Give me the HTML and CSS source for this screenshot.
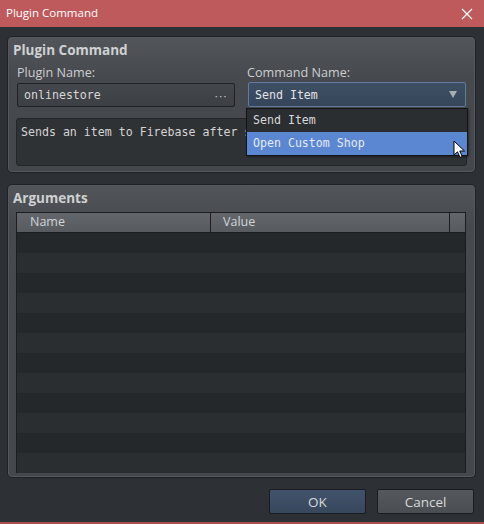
FILE: index.html
```html
<!DOCTYPE html>
<html>
<head>
<meta charset="utf-8">
<link rel="stylesheet" href="styles.css">
</head>
<body>
<div class="window">
  <div class="titlebar">
    <span class="title">Plugin Command</span>
    <svg class="close" width="12" height="12" viewBox="0 0 12 12"><path d="M1 1 L11 11 M11 1 L1 11" stroke="#fff" stroke-width="1.2" fill="none"/></svg>
  </div>
  <div class="content">
    <div class="group group-cmd">
      <div class="group-title">Plugin Command</div>
      <div class="fields">
        <div class="field">
          <div class="label">Plugin Name:</div>
          <div class="input"><span class="mono">onlinestore</span><span class="dots">···</span></div>
        </div>
        <div class="field field-right">
          <div class="label">Command Name:</div>
          <div class="select"><span class="mono">Send Item</span><span class="arrow"></span></div>
        </div>
      </div>
      <div class="textarea mono">Sends an item to Firebase after s</div>
      <div class="dropdown">
        <div class="opt mono">Send Item</div>
        <div class="opt opt-sel mono">Open Custom Shop</div>
      </div>
      <svg class="cursor" width="14" height="20" viewBox="0 0 14 20"><path d="M1 1 L1 15 L4.5 11.8 L7 17.5 L9.2 16.5 L6.8 11 L11.5 11 Z" fill="#fff" stroke="#000" stroke-width="1" stroke-linejoin="miter"/></svg>
    </div>
    <div class="group group-args">
      <div class="group-title">Arguments</div>
      <div class="table">
        <div class="thead">
          <div class="th th-name">Name</div>
          <div class="th th-value">Value</div>
          <div class="th th-end"></div>
        </div>
        <div class="tbody">
          <div class="row"></div><div class="row"></div><div class="row"></div><div class="row"></div>
          <div class="row"></div><div class="row"></div><div class="row"></div><div class="row"></div>
          <div class="row"></div><div class="row"></div><div class="row"></div><div class="row"></div>
        </div>
      </div>
    </div>
    <div class="buttons">
      <div class="btn btn-ok">OK</div>
      <div class="btn btn-cancel">Cancel</div>
    </div>
  </div>
</div>
</body>
</html>
```

FILE: styles.css
```css
* { box-sizing: border-box; }
html, body { margin: 0; padding: 0; }
body {
  width: 484px;
  height: 524px;
  background: #2d3034;
  font-family: "Open Sans", "Noto Sans", sans-serif;
  font-size: 12px;
  color: #d4d4d4;
  overflow: hidden;
}
.window {
  width: 484px;
  height: 524px;
  border-bottom: 2px solid #a8504f;
  display: flex;
  flex-direction: column;
}
.titlebar {
  height: 27px;
  background: #bf5a5c;
  display: flex;
  align-items: center;
  justify-content: space-between;
  padding: 0 11px 0 6px;
  color: #fff;
  font-size: 11.5px;
}
.title { position: relative; top: -1px; }
.content {
  padding: 9px 8px 0 7px;
  display: flex;
  flex-direction: column;
}
.group {
  border: 1px solid #202326;
  border-radius: 5px;
  background: linear-gradient(#52565a, #46494d 40px, #44474b);
  box-shadow: inset 0 0 0 1px #55595d;
  padding: 4px 8px 0 5px;
  position: relative;
}
.group-cmd { height: 137px; }
.group-args { height: 294px; margin-top: 11px; padding-right: 9px; }
.group-title {
  font-weight: 700;
  font-size: 13.5px;
  color: #cfd1d3;
  height: 18px;
  line-height: 18px;
}
.fields {
  display: flex;
  gap: 12px;
  padding-left: 4px;
  margin-top: 5px;
}
.field { width: 218px; }
.field-right { width: 219px; }
.label {
  height: 19px;
  line-height: 17px;
  color: #cdcfd1;
  font-size: 12.6px;
}
.mono {
  font-family: "DejaVu Sans Mono", "Liberation Mono", monospace;
  font-size: 11.6px;
}
.input {
  height: 24px;
  border: 1px solid #1f2124;
  border-radius: 2px;
  background: linear-gradient(#44474b, #3c3f43);
  display: flex;
  align-items: center;
  justify-content: space-between;
  padding: 0 6px 0 6px;
  color: #d8d8d8;
}
.dots { color: #cfcfcf; font-size: 11px; letter-spacing: 1.5px; }
.select {
  height: 25px;
  margin-top: -1px;
  margin-left: 1px;
  border: 1px solid #5f7c9e;
  border-radius: 2px;
  background: linear-gradient(#3e4f65, #364558);
  display: flex;
  align-items: center;
  justify-content: space-between;
  padding: 0 8px 0 6px;
  color: #e2e4e8;
}
.arrow {
  width: 0; height: 0;
  border-left: 4px solid transparent;
  border-right: 4px solid transparent;
  border-top: 7px solid #a8aeb6;
}
.textarea {
  margin-top: 11px;
  margin-left: 3px;
  height: 48px;
  border: 1px solid #232528;
  border-radius: 3px;
  background: #2f3235;
  padding: 6px 4px;
  color: #d4d4d4;
}
.dropdown {
  position: absolute;
  left: 238px;
  top: 71px;
  width: 222px;
  border: 1px solid #121416;
  background: #2b2e31;
  box-shadow: 1px 1px 2px rgba(0,0,0,0.4);
}
.opt {
  height: 23px;
  line-height: 23px;
  padding-left: 6px;
  color: #d8d8d8;
}
.opt-sel {
  background: #5b87d2;
  color: #e4eaf4;
}
.cursor {
  position: absolute;
  left: 445px;
  top: 103px;
}
.table {
  margin-top: 5px;
  margin-left: 3px;
  height: 261px;
  border: 1px solid #1b1d20;
  background: #2b2e31;
  display: flex;
  flex-direction: column;
}
.thead {
  height: 20px;
  display: flex;
  background: linear-gradient(#63676b, #575b5f);
  border-bottom: 1px solid #1b1d20;
}
.th {
  height: 19px;
  line-height: 18px;
  color: #d2d4d6;
  font-size: 12.5px;
}
.th-name { width: 194px; padding-left: 13px; border-right: 1px solid #1b1d20; }
.th-value { width: 239px; padding-left: 12px; border-right: 1px solid #1b1d20; }
.th-end { flex: 1; }
.tbody { flex: 1; }
.row { height: 20px; background: #25282b; }
.row:nth-child(even) { background: #2b2e31; }
.buttons {
  display: flex;
  justify-content: flex-end;
  gap: 11px;
  margin-top: 11px;
  padding-right: 2px;
}
.btn {
  width: 97px;
  height: 25px;
  border: 1px solid #1a1c1f;
  border-radius: 2px;
  display: flex;
  align-items: center;
  justify-content: center;
  font-size: 13.5px;
  color: #d8dadc;
}
.btn-ok { background: linear-gradient(#41536c, #37475c); }
.btn-cancel { background: linear-gradient(#55595d, #4a4d51); }
```
